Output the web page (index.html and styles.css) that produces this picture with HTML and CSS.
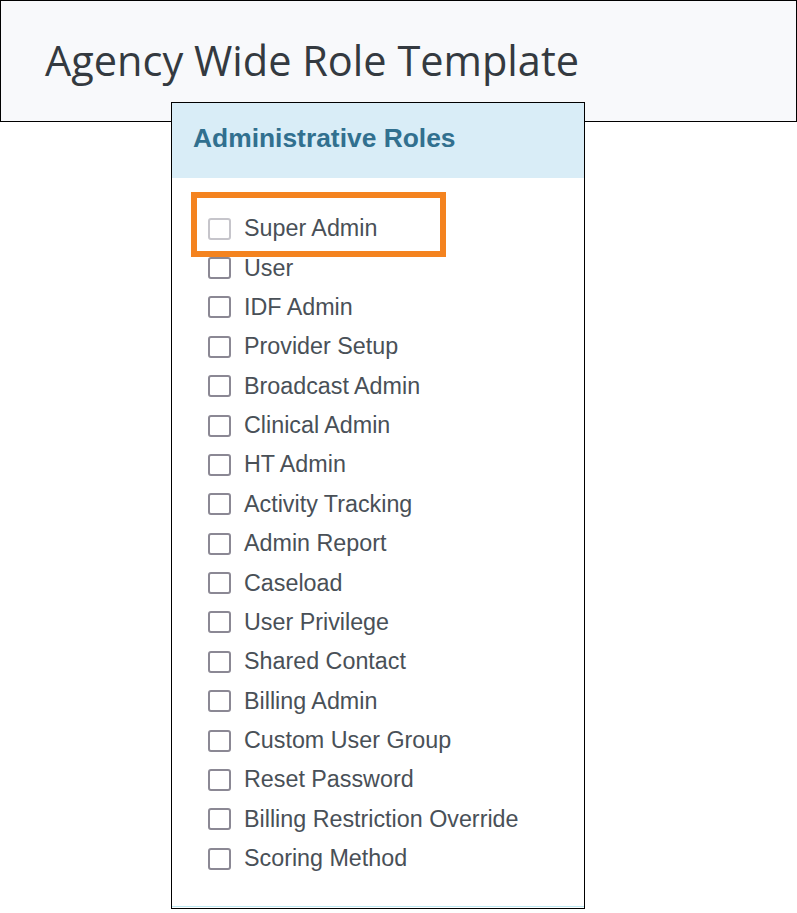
FILE: index.html
```html
<!DOCTYPE html>
<html>
<head>
<meta charset="utf-8">
<link rel="stylesheet" href="styles.css">
</head>
<body>
<header class="page-header">
  <h1 class="page-title">Agency Wide Role Template</h1>
</header>
<section class="panel">
  <div class="panel-heading">
    <h2 class="panel-title">Administrative Roles</h2>
  </div>
  <div class="panel-body">
    <ul class="role-list">
      <li class="role"><span class="box box-disabled"></span><span class="label">Super Admin</span></li>
      <li class="role"><span class="box"></span><span class="label">User</span></li>
      <li class="role"><span class="box"></span><span class="label">IDF Admin</span></li>
      <li class="role"><span class="box"></span><span class="label">Provider Setup</span></li>
      <li class="role"><span class="box"></span><span class="label">Broadcast Admin</span></li>
      <li class="role"><span class="box"></span><span class="label">Clinical Admin</span></li>
      <li class="role"><span class="box"></span><span class="label">HT Admin</span></li>
      <li class="role"><span class="box"></span><span class="label">Activity Tracking</span></li>
      <li class="role"><span class="box"></span><span class="label">Admin Report</span></li>
      <li class="role"><span class="box"></span><span class="label">Caseload</span></li>
      <li class="role"><span class="box"></span><span class="label">User Privilege</span></li>
      <li class="role"><span class="box"></span><span class="label">Shared Contact</span></li>
      <li class="role"><span class="box"></span><span class="label">Billing Admin</span></li>
      <li class="role"><span class="box"></span><span class="label">Custom User Group</span></li>
      <li class="role"><span class="box"></span><span class="label">Reset Password</span></li>
      <li class="role"><span class="box"></span><span class="label">Billing Restriction Override</span></li>
      <li class="role"><span class="box"></span><span class="label">Scoring Method</span></li>
    </ul>
  </div>
  <div class="highlight"></div>
</section>
</body>
</html>
```
FILE: styles.css
```css
html, body {
  margin: 0;
  padding: 0;
  background: #ffffff;
}
body {
  width: 797px;
  height: 913px;
  overflow: hidden;
}
.page-header {
  box-sizing: border-box;
  width: 797px;
  height: 122px;
  border: 1px solid #000;
  background: #f8f9fb;
  padding: 33px 0 0 44px;
}
.page-title {
  margin: 0;
  font-family: "Open Sans", "Noto Sans", sans-serif;
  font-weight: 400;
  font-size: 41.5px;
  line-height: 52px;
  color: #343a40;
}
.panel {
  position: relative;
  box-sizing: border-box;
  width: 414px;
  height: 807px;
  margin: -20px 0 0 171px;
  border: 1px solid #000;
  background: #fff;
  display: flex;
  flex-direction: column;
}
.panel-heading {
  height: 75px;
  background: #d9edf7;
  display: flex;
  align-items: center;
  padding: 0 0 6px 21px;
  box-sizing: border-box;
}
.panel-title {
  margin: 0;
  font-family: "Liberation Sans", Arial, sans-serif;
  font-weight: 700;
  font-size: 26.4px;
  line-height: 30px;
  color: #31708f;
}
.panel-body {
  flex: 1;
  border-bottom: 1px solid #bce8f1;
  margin-bottom: 1px;
  padding: 31px 0 0 36px;
}
.role-list {
  list-style: none;
  margin: 0;
  padding: 0;
}
.role {
  height: 39.375px;
  display: flex;
  align-items: center;
  gap: 13px;
}
.box {
  box-sizing: border-box;
  width: 23px;
  height: 22px;
  border: 2px solid #8b8894;
  border-radius: 3px;
  background: #fff;
}
.box-disabled {
  border-color: #c6c5cb;
}
.label {
  font-family: "Liberation Sans", Arial, sans-serif;
  font-size: 23.3px;
  color: #495057;
}
.highlight {
  position: absolute;
  left: 19px;
  top: 89px;
  width: 255px;
  height: 65px;
  box-sizing: border-box;
  border: 6px solid #f4831f;
}
```
